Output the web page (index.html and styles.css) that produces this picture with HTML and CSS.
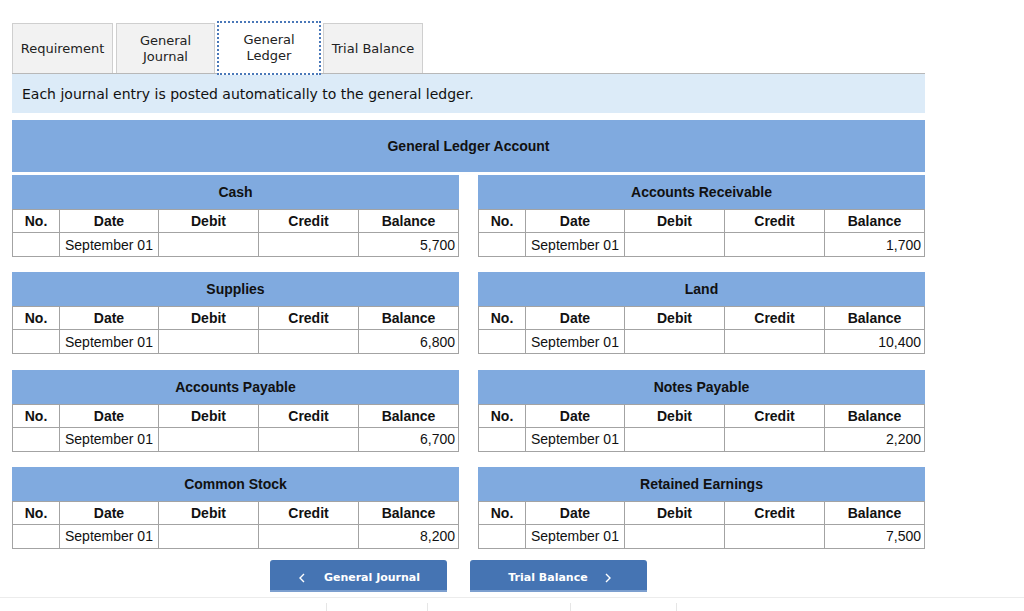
FILE: index.html
```html
<!DOCTYPE html>
<html lang="en">
    <head>
        <meta charset="UTF-8">
        <title>General Ledger</title>
        <link rel="stylesheet" href="styles.css">
    </head>
    <body>
        <div class="page">
            <div class="tabs">
                <div class="tab tab-req">Requirement</div>
                <div class="tab tab-gj">General<br>Journal</div>
                <div class="tab tab-gl active">General<br>Ledger</div>
                <div class="tab tab-tb">Trial Balance</div>
            </div>
            <div class="info">Each journal entry is posted automatically to the general ledger.</div>
            <div class="ledger-title">General Ledger Account</div>

            <div class="accounts">
                <div class="account">
                    <div class="account-name">Cash</div>
                    <table>
                        <tr><th class="c-no">No.</th><th class="c-date">Date</th><th>Debit</th><th>Credit</th><th>Balance</th></tr>
                        <tr><td></td><td>September 01</td><td></td><td></td><td class="num">5,700</td></tr>
                    </table>
                </div>
                <div class="account">
                    <div class="account-name">Accounts Receivable</div>
                    <table>
                        <tr><th class="c-no">No.</th><th class="c-date">Date</th><th>Debit</th><th>Credit</th><th>Balance</th></tr>
                        <tr><td></td><td>September 01</td><td></td><td></td><td class="num">1,700</td></tr>
                    </table>
                </div>
                <div class="account">
                    <div class="account-name">Supplies</div>
                    <table>
                        <tr><th class="c-no">No.</th><th class="c-date">Date</th><th>Debit</th><th>Credit</th><th>Balance</th></tr>
                        <tr><td></td><td>September 01</td><td></td><td></td><td class="num">6,800</td></tr>
                    </table>
                </div>
                <div class="account">
                    <div class="account-name">Land</div>
                    <table>
                        <tr><th class="c-no">No.</th><th class="c-date">Date</th><th>Debit</th><th>Credit</th><th>Balance</th></tr>
                        <tr><td></td><td>September 01</td><td></td><td></td><td class="num">10,400</td></tr>
                    </table>
                </div>
                <div class="account">
                    <div class="account-name">Accounts Payable</div>
                    <table>
                        <tr><th class="c-no">No.</th><th class="c-date">Date</th><th>Debit</th><th>Credit</th><th>Balance</th></tr>
                        <tr><td></td><td>September 01</td><td></td><td></td><td class="num">6,700</td></tr>
                    </table>
                </div>
                <div class="account">
                    <div class="account-name">Notes Payable</div>
                    <table>
                        <tr><th class="c-no">No.</th><th class="c-date">Date</th><th>Debit</th><th>Credit</th><th>Balance</th></tr>
                        <tr><td></td><td>September 01</td><td></td><td></td><td class="num">2,200</td></tr>
                    </table>
                </div>
                <div class="account">
                    <div class="account-name">Common Stock</div>
                    <table>
                        <tr><th class="c-no">No.</th><th class="c-date">Date</th><th>Debit</th><th>Credit</th><th>Balance</th></tr>
                        <tr><td></td><td>September 01</td><td></td><td></td><td class="num">8,200</td></tr>
                    </table>
                </div>
                <div class="account">
                    <div class="account-name">Retained Earnings</div>
                    <table>
                        <tr><th class="c-no">No.</th><th class="c-date">Date</th><th>Debit</th><th>Credit</th><th>Balance</th></tr>
                        <tr><td></td><td>September 01</td><td></td><td></td><td class="num">7,500</td></tr>
                    </table>
                </div>
            </div>

            <div class="nav">
                <button class="nav-btn">
                    <svg class="chev" width="6" height="10" viewBox="0 0 6 10"><polyline points="5,1 1,5 5,9" fill="none" stroke="#fff" stroke-width="1.4"/></svg>
                    General Journal
                </button>
                <button class="nav-btn next">
                    Trial Balance
                    <svg class="chev" width="6" height="10" viewBox="0 0 6 10"><polyline points="1,1 5,5 1,9" fill="none" stroke="#fff" stroke-width="1.4"/></svg>
                </button>
            </div>
        </div>
        <div class="footer">
            <div class="foot-cell c1"></div>
            <div class="foot-cell c2"></div>
            <div class="foot-cell c3"></div>
            <div class="foot-cell c4"></div>
        </div>
    </body>
</html>
```

FILE: styles.css
```css
body {
    margin: 0;
    font-family: "DejaVu Sans", Verdana, sans-serif;
    color: #222;
    background: #fff;
}

.page {
    width: 913px;
    padding: 23px 0 0 12px;
}

.tabs {
    display: flex;
    align-items: flex-end;
    height: 50px;
    border-bottom: 1px solid #b8b8b8;
}

.tab {
    box-sizing: border-box;
    height: 50px;
    display: flex;
    align-items: center;
    justify-content: center;
    text-align: center;
    font-size: 13px;
    line-height: 16px;
    background-color: #f2f2f2;
    border: 1px solid #cfcfcf;
    border-bottom: none;
}

.tab-req { width: 101px; margin-right: 3px; }
.tab-gj { width: 99px; margin-right: 2px; }
.tab-gl { width: 104px; margin-right: 2px; }
.tab-tb { width: 100px; }

.tab.active {
    background-color: #fff;
    height: 54px;
    margin-bottom: -2px;
    border: 2px dotted #4a78b8;
}

.info {
    height: 39px;
    line-height: 40px;
    padding-left: 10px;
    font-size: 14px;
    color: #111;
    background-color: #dcebf8;
}

.ledger-title {
    margin-top: 7px;
    height: 52px;
    line-height: 52px;
    text-align: center;
    font-family: "Liberation Sans", Arial, sans-serif;
    font-weight: bold;
    font-size: 14px;
    color: #111;
    background-color: #80aadf;
}

.accounts {
    display: grid;
    grid-template-columns: 447px 447px;
    column-gap: 19px;
    row-gap: 15.34px;
    margin-top: 3px;
    font-family: "Liberation Sans", Arial, sans-serif;
    font-size: 14px;
    color: #111;
}

.account-name {
    height: 34px;
    line-height: 35px;
    text-align: center;
    font-weight: bold;
    background-color: #80aadf;
}

table {
    width: 447px;
    border-collapse: collapse;
    table-layout: fixed;
}

th, td {
    border: 1px solid #a3a3a3;
    height: 22px;
    padding: 0 3px;
    font-size: 14px;
    line-height: 18px;
}

th {
    text-align: center;
    font-weight: bold;
}

td {
    height: 23px;
    text-align: left;
    padding-left: 5px;
}

.c-no { width: 40px; }
.c-date { width: 92px; }

td.num {
    text-align: right;
    padding-right: 3px;
}

.nav {
    display: flex;
    gap: 23px;
    padding-left: 258px;
    margin-top: 11px;
}

.nav-btn {
    width: 177px;
    height: 32px;
    border: none;
    border-bottom: 2px solid #7c9fcf;
    border-radius: 3px 3px 0 0;
    background-color: #4574b3;
    color: #fff;
    font-family: "DejaVu Sans", Verdana, sans-serif;
    font-weight: bold;
    font-size: 11px;
    display: flex;
    align-items: center;
    justify-content: center;
    padding: 6px 0 0 2px;
}

.chev {
    margin-right: 19px;
}

.next .chev {
    margin: 0 0 0 17px;
}

.footer {
    margin-top: 5px;
    border-top: 1px solid #ececec;
    display: flex;
    height: 20px;
    padding: 5px 0 0 326px;
}

.foot-cell {
    border-left: 1px solid #e6e6e6;
}

.c1 { width: 100px; }
.c2 { width: 142px; }
.c3 { width: 105px; }
.c4 { width: 100px; }
```
